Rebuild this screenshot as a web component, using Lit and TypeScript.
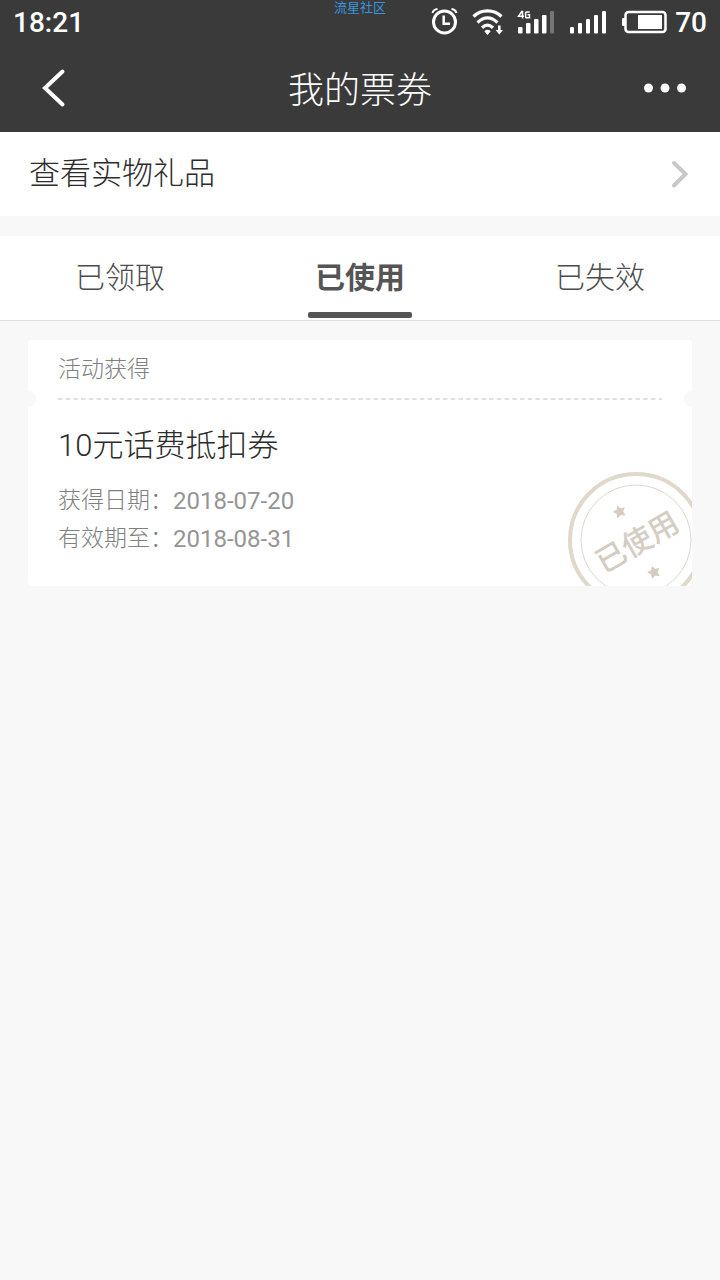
import { LitElement, html, css, svg } from "lit";
import { customElement, property, state } from "lit/decorators.js";
import { classMap } from "lit/directives/class-map.js";

const FONT = css`Roboto, "Noto Sans CJK SC", sans-serif`;

@customElement("status-bar")
export class StatusBar extends LitElement {
  static styles = css`
    :host { display: block; }
    .bar { position: relative; display: flex; align-items: center; justify-content: space-between;
      height: 44px; padding: 0 13px; color: #fff; font: 500 28px/40px ${FONT}; }
    .icons { display: flex; align-items: center; }
    .icons svg { display: block; }
    .value { padding-top: 2px; }
    .mark { position: absolute; top: 0; left: 0; right: 0; text-align: center;
      font: 400 13px/13px "Noto Sans CJK SC", sans-serif; color: #3996dc; }
  `;

  render() {
    return html`
      <div class="bar">
        <span class="value">18:21</span>
        <span class="mark">流星社区</span>
        <div class="icons">
          <svg width="245" height="44" viewBox="430 0 245 44" fill="#fff" aria-hidden="true">
            <circle cx="444.5" cy="22" r="11" fill="none" stroke="#fff" stroke-width="3" />
            <path d="M443.7 15.500v8.300h6.300" fill="none" stroke="#fff" stroke-width="2.500" />
            <path d="M432.5 13q1-3.500 5-4M456.500 13q-1-3.500-5-4" fill="none" stroke="#fff" stroke-width="2" />
            <g fill="none" stroke="#fff" stroke-width="3.200">
              <path d="M473.500 16.500C481 9 494 9 501.500 16.500" />
              <path d="M477.500 22.500C484 16.500 491 16.500 497.500 22.500" />
              <path d="M482 27.700C485.500 24.500 489.500 24.500 493 27.700" />
            </g>
            <path d="M484.300 31.200Q487.500 28.500 490.700 31.200L487.500 35z" />
            <path d="M498 25.500h2.600v4.500h2.400l-3.700 4.500-3.700-4.500h2.400z" />
            <g fill="none" stroke="#fff" stroke-width="1.500">
              <path d="M522.500 18.500v-7h-.8l-3.200 4.800h5.500" />
              <path d="M529.700 12h-3.200q-.9 0-.9.900v4q0 .9.900.9h3v-3h-2" />
            </g>
            <rect x="518" y="27" width="4.500" height="6.500" rx="1" />
            <rect x="526" y="23" width="4.500" height="10.500" rx="1" />
            <rect x="534" y="19" width="4.500" height="14.500" rx="1" />
            <rect x="542" y="15" width="4.500" height="18.500" rx="1" />
            <rect x="550" y="11" width="4" height="22.500" rx="1" fill="#757575" />
            <rect x="570" y="27" width="4" height="6.500" rx="1" />
            <rect x="578" y="23" width="4" height="10.500" rx="1" />
            <rect x="586" y="19" width="4" height="14.500" rx="1" />
            <rect x="594" y="15" width="4" height="18.500" rx="1" />
            <rect x="602" y="11" width="4" height="22.500" rx="1" />
            <rect x="625.500" y="12" width="40" height="20" rx="3" fill="none" stroke="#fff" stroke-width="2.500" />
            <rect x="622" y="18" width="4" height="8" rx="1" />
            <rect x="638" y="15" width="24" height="14" />
          </svg>
          <span class="value">70</span>
        </div>
      </div>
    `;
  }
}

@customElement("coupon-card")
export class CouponCard extends LitElement {
  @property() source = "";
  @property() name = "";
  @property() obtained = "";
  @property() expires = "";

  static styles = css`
    :host { display: block; }
    .card { position: relative; overflow: hidden; background: #fff; border-radius: 4px;
      padding: 0 30px 28px; font-family: ${FONT}; font-weight: 300; }
    .source { margin: 0; height: 58px; font-size: 23px; line-height: 60px; color: #808080; }
    .rule { display: block; width: 100%; height: 2px; }
    .notch { position: absolute; top: 51px; width: 16px; height: 16px; border-radius: 8px; background: #f8f8f8; }
    .left { left: -8px; }
    .right { right: -8px; }
    .name { margin: 24px 0 14px; font-size: 31px; line-height: 44px; font-weight: 300; color: #2c2c2c; }
    .dates { margin: 0; font-size: 23px; line-height: 38px; color: #808080; }
    .dates div { display: flex; }
    .dates dd { margin: 0; font-size: 24px; font-weight: 400; color: #959595; }
    .stamp { position: absolute; right: -12px; bottom: -22px; }
    .ink { font: 500 30px "Noto Sans CJK SC", sans-serif; fill: #d5cdc2; }
  `;

  render() {
    const star = (x: number, y: number) => svg`
      <path transform="translate(${x} ${y}) rotate(-20)" fill="#d5cdc2" stroke="#d5cdc2" stroke-linejoin="round"
        d="M0-5.500 1.900-2 5.600-1.700 2.900 1 3.600 5 0 3.200-3.600 5-2.900 1-5.600-1.700-1.900-2z" />`;
    return html`
      <article class="card">
        <p class="source">${this.source}</p>
        <svg class="rule" aria-hidden="true">
          <line x1="0" y1="1" x2="100%" y2="1" stroke="#e0e0e0" stroke-width="2" stroke-dasharray="4.500 3.200" />
        </svg>
        <span class="notch left"></span>
        <span class="notch right"></span>
        <h2 class="name">${this.name}</h2>
        <dl class="dates">
          <div><dt>获得日期：</dt><dd>${this.obtained}</dd></div>
          <div><dt>有效期至：</dt><dd>${this.expires}</dd></div>
        </dl>
        <svg class="stamp" width="136" height="136" viewBox="0 0 136 136">
          <circle cx="68" cy="68" r="66" fill="none" stroke="#e0d9cb" stroke-width="4" />
          <circle cx="68" cy="68" r="55" fill="none" stroke="#dcd8ce" />
          ${star(51.5, 39.500)}
          ${star(86, 100)}
          <text class="ink" transform="rotate(-30 68 68)" x="68" y="81" text-anchor="middle">已使用</text>
        </svg>
      </article>
    `;
  }
}

@customElement("app-root")
export class AppRoot extends LitElement {
  @state() private active = 1;

  private tabs = ["已领取", "已使用", "已失效"];

  static styles = css`
    :host { display: block; min-height: 100vh; background: #f8f8f8; font-family: ${FONT}; font-weight: 300; }
    button { border: 0; padding: 0; background: none; font: inherit; color: inherit; cursor: pointer; }
    svg { display: block; }
    .top { background: #3a3a3a; color: #fff; }
    .nav { display: grid; grid-template-columns: 1fr auto 1fr; align-items: center; height: 88px; padding: 0 32px; }
    .title { margin: 0; padding-top: 6px; font-size: 36px; line-height: 52px; font-weight: 300; }
    .more { justify-self: end; }
    .gifts { display: flex; align-items: center; justify-content: space-between; height: 84px;
      padding: 0 30px 0 29px; background: #fff; color: #2c2c2c; font-size: 31px; line-height: 44px; text-decoration: none; }
    .tabs { display: grid; grid-template-columns: repeat(3, 1fr); height: 84px; margin-top: 20px;
      background: #fff; border-bottom: 1px solid #dedede; }
    .tab { display: flex; flex-direction: column; align-items: center; justify-content: space-between;
      padding: 20px 0 2px; font-size: 30px; line-height: 44px; color: #4c4c4c; }
    .tab::after { content: ""; width: 104px; height: 6px; border-radius: 2px; }
    .on { font-weight: 700; color: #555; }
    .on::after { background: #555; }
    .list { padding: 19px 28px; }
  `;

  render() {
    return html`
      <header class="top">
        <status-bar></status-bar>
        <nav class="nav">
          <button aria-label="返回">
            <svg width="44" height="44" viewBox="0 0 44 44" fill="none" stroke="#fff" stroke-width="4">
              <path d="M30.500 5.500 13 22 30.500 38.500" stroke-linecap="round" />
            </svg>
          </button>
          <h1 class="title">我的票券</h1>
          <button class="more" aria-label="更多">
            <svg width="46" height="44" viewBox="0 0 46 44" fill="#fff">
              <circle cx="6.500" cy="22" r="4.500" /><circle cx="23" cy="22" r="4.500" /><circle cx="39.500" cy="22" r="4.500" />
            </svg>
          </button>
        </nav>
      </header>
      <a class="gifts" href="#gifts">
        <span>查看实物礼品</span>
        <svg width="20" height="30" viewBox="0 0 20 30" fill="none" stroke="#c8c8c8" stroke-width="4" stroke-linecap="round">
          <path d="M4 4 15.500 15 4 26.500" />
        </svg>
      </a>
      <div class="tabs" role="tablist">
        ${this.tabs.map((t, i) => html`
          <button role="tab" aria-selected=${i === this.active ? "true" : "false"}
            class=${classMap({ tab: true, on: i === this.active })} @click=${() => (this.active = i)}>${t}</button>`)}
      </div>
      <main class="list">
        <coupon-card source="活动获得" name="10元话费抵扣券" obtained="2018-07-20" expires="2018-08-31"></coupon-card>
      </main>
    `;
  }
}
